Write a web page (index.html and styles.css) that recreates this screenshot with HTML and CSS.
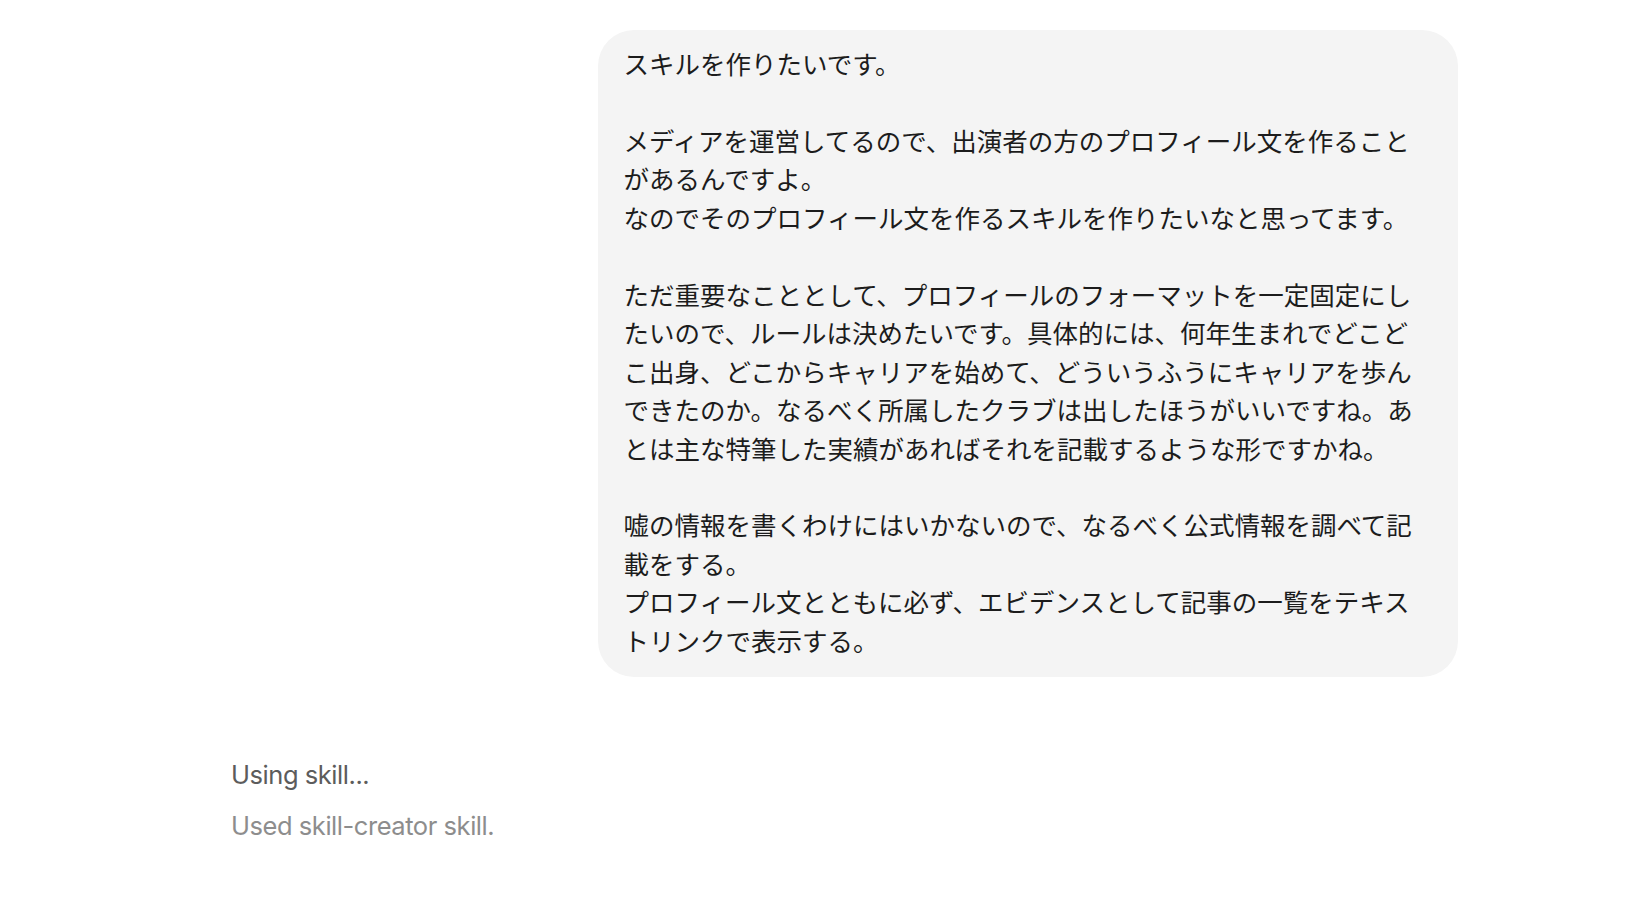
FILE: index.html
```html
<!DOCTYPE html>
<html lang="ja">
<head>
    <meta charset="UTF-8">
    <meta name="viewport" content="width=device-width, initial-scale=1.0">
    <title>skill-creator</title>
    <link rel="stylesheet" href="styles.css">
</head>
<body>
    <main class="thread">
        <!-- user message -->
        <div class="turn user">
            <div class="bubble">スキルを作りたいです。

メディアを運営してるので、出演者の方のプロフィール文を作ることがあるんですよ。
なのでそのプロフィール文を作るスキルを作りたいなと思ってます。

ただ重要なこととして、プロフィールのフォーマットを一定固定にしたいので、ルールは決めたいです。具体的には、何年生まれでどこどこ出身、どこからキャリアを始めて、どういうふうにキャリアを歩んできたのか。なるべく所属したクラブは出したほうがいいですね。あとは主な特筆した実績があればそれを記載するような形ですかね。

嘘の情報を書くわけにはいかないので、なるべく公式情報を調べて記載をする。
プロフィール文とともに必ず、エビデンスとして記事の一覧をテキストリンクで表示する。</div>
        </div>

        <!-- assistant status -->
        <div class="turn assistant">
            <div class="status running">Using skill...</div>
            <div class="status done">Used skill-creator skill.</div>
        </div>
    </main>
</body>
</html>
```

FILE: styles.css
```css
* {
    margin: 0;
    padding: 0;
    box-sizing: border-box;
}

body {
    background-color: #fff;
    color: #1f1f1f;
    font-family: 'Inter', 'Noto Sans CJK JP', sans-serif;
    font-size: 25.5px;
    line-height: 38.25px;
}

.thread {
    width: 1228px;
    margin-left: 230px;
    padding-top: 30px;
}

.turn.user {
    display: flex;
    justify-content: flex-end;
}

.bubble {
    max-width: 70%;
    background-color: #f4f4f4;
    border-radius: 36px;
    padding: 14px 27px 18px 25px;
    line-height: 38.45px;
    white-space: pre-wrap;
    font-family: 'Noto Sans CJK JP', sans-serif;
    color: #1c1c1c;
}

.turn.assistant {
    display: flex;
    flex-direction: column;
    gap: 12px;
    margin-top: 79px;
    padding-left: 1px;
}

.status {
    letter-spacing: -0.45px;
}

.status.running {
    color: #5c5c5c;
}

.status.done {
    color: #8d8d8d;
}
```
